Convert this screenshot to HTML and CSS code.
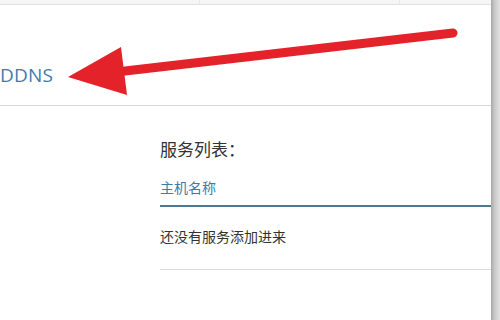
FILE: index.html
```html
<!DOCTYPE html>
<html>
<head>
<meta charset="utf-8">
<link rel="stylesheet" href="styles.css">
</head>
<body>
<div class="frame">
  <div class="page">
    <div class="tabs">
      <div class="tab"></div>
      <div class="tab"></div>
      <div class="tab"></div>
    </div>
    <div class="header">
      <span class="title">DDNS</span>
    </div>
    <div class="content">
      <div class="section-title">服务列表：</div>
      <div class="tabbar"><span class="tab-label">主机名称</span></div>
      <div class="empty">还没有服务添加进来</div>
    </div>
  </div>
  <div class="scrollbar"></div>
</div>
<svg class="arrow" width="500" height="320" viewBox="0 0 500 320">
  <line x1="125" y1="71" x2="453" y2="33" stroke="#e3222a" stroke-width="9" stroke-linecap="round"/>
  <polygon points="68,77 121,47 127,95" fill="#e3222a"/>
</svg>
</body>
</html>
```
FILE: styles.css
```css
html, body {
  margin: 0;
  padding: 0;
  background: #fff;
}
body {
  width: 500px;
  height: 320px;
  overflow: hidden;
  position: relative;
  font-family: "Noto Sans CJK SC", "Noto Sans", sans-serif;
}
.frame {
  display: flex;
  width: 500px;
  height: 320px;
}
.page {
  flex: 1;
  min-width: 0;
  display: flex;
  flex-direction: column;
  overflow: hidden;
}
.tabs {
  display: flex;
  height: 4px;
  background: #f6f6f6;
  border-bottom: 1px solid #e2e2e2;
}
.tab {
  flex: 0 0 200px;
  box-sizing: border-box;
  border-right: 1px solid #e8e8e8;
}
.header {
  height: 100px;
  border-bottom: 1px solid #d6d6d6;
  display: flex;
  align-items: flex-start;
}
.title {
  margin-top: 57px;
  font-family: "Open Sans", "Noto Sans", sans-serif;
  font-size: 19px;
  line-height: 26px;
  color: #3f7cad;
  letter-spacing: 0.2px;
}
.content {
  padding-left: 160px;
}
.section-title {
  margin-top: 32px;
  font-size: 17px;
  line-height: 22px;
  color: #333;
}
.tabbar {
  margin-top: 14px;
  border-bottom: 2px solid #4b7a8e;
  height: 31px;
}
.tab-label {
  font-size: 14px;
  line-height: 24px;
  color: #3b7ca8;
}
.empty {
  margin-top: 19px;
  padding-bottom: 23px;
  border-bottom: 1px solid #dcdcdc;
  font-size: 14px;
  line-height: 20px;
  color: #333;
}
.scrollbar {
  flex: 0 0 9px;
  background: linear-gradient(to right, #a8a8a8, #c8c8c8 40%, #e2e2e2);
}
.arrow {
  position: absolute;
  left: 0;
  top: 0;
}
```
